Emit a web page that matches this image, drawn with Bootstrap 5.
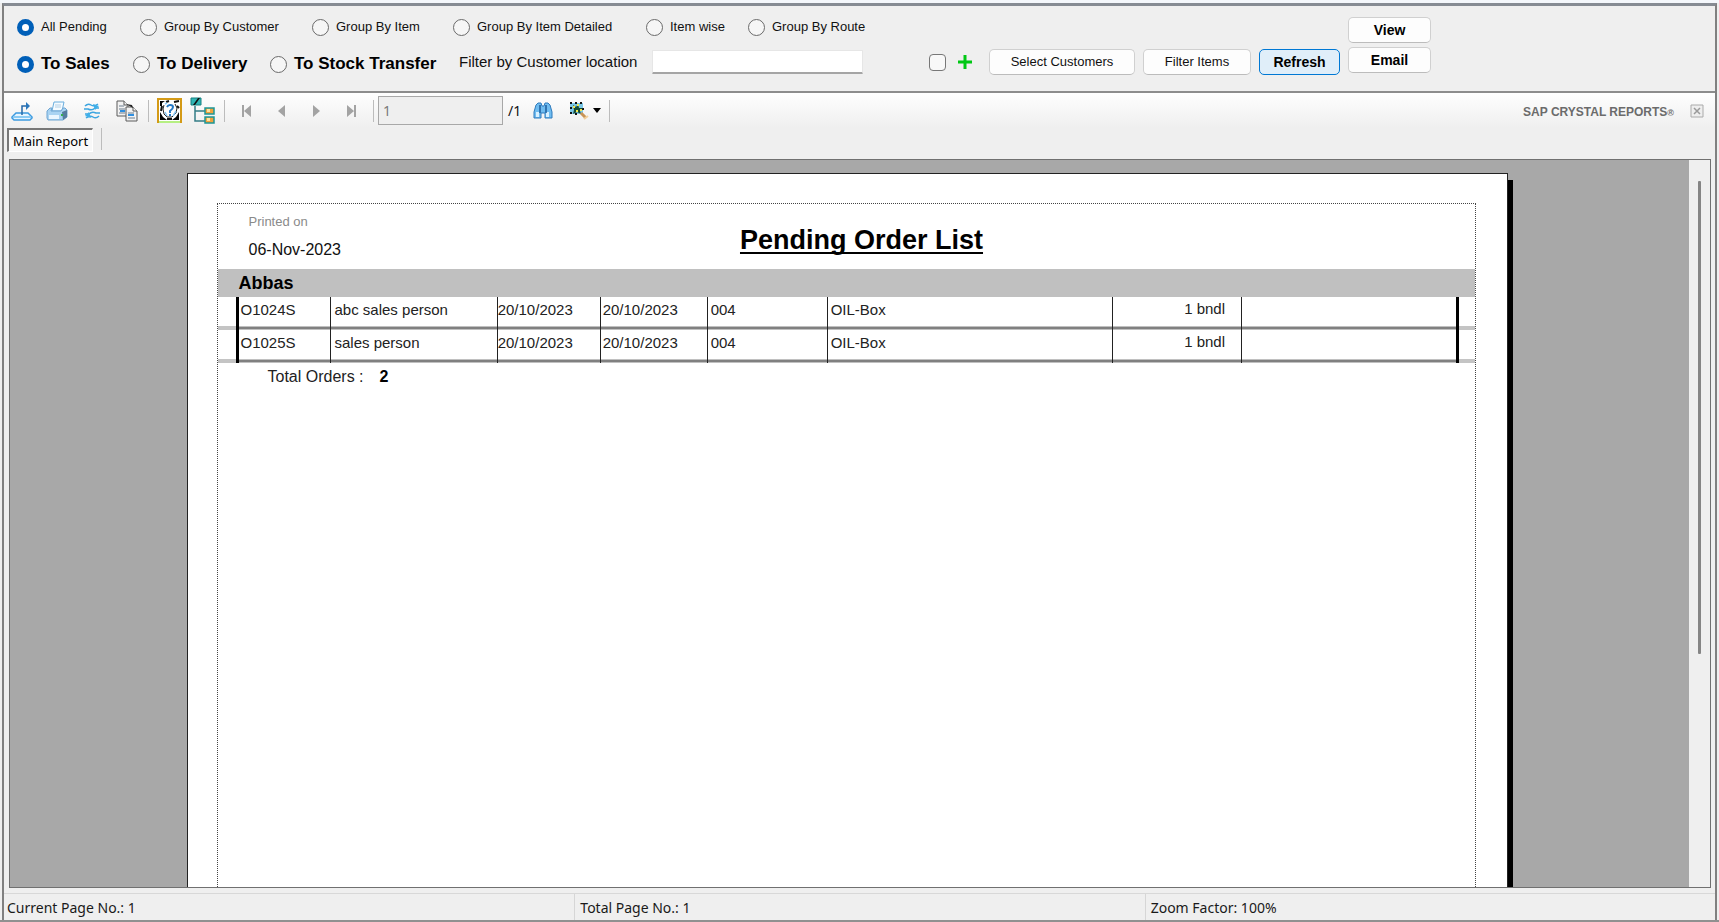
<!DOCTYPE html>
<html lang="en">
<head>
<meta charset="utf-8">
<meta name="viewport" content="width=device-width, initial-scale=1">
<title>Pending Order List</title>
<link rel="stylesheet" href="https://cdn.jsdelivr.net/npm/bootstrap@5.3.0/dist/css/bootstrap.min.css">
<style>
  :root { --face: #efefef; --ui: "Noto Sans", "Open Sans", sans-serif; }
  body { font-family: "Liberation Sans", Arial, sans-serif; font-size: 13px; line-height: 16px; color: #111; background: var(--face); }
  .app-window { border-top: 3px solid #f4f7fb; border-bottom: 2px solid #909090; }
  .window-frame { border: 2px solid #808080; border-bottom: 0; border-top: 3px solid #868b93; margin: 0 2px; min-height: 0; }

  /* filter panel */
  .filter-panel { padding: 7px 12px 0 13px; height: 87px; border-bottom: 2px solid #8c8c8c; }
  .filter-main { flex: 0 1 1323px; min-width: 0; }
  .filter-line { height: 34px; }
  .group-options { display: grid; grid-template-columns: 123px 172px 141px 193px 102px auto; height: 28px; }
  .target-options { display: grid; grid-template-columns: 116px 137px 189px; padding-top: 4px; font-size: 17px; font-weight: 700; color: #000; }
  .option { display: flex; align-items: center; gap: 7px; white-space: nowrap; }
  .option .form-check-input { width: 17px; height: 17px; margin: 0; flex: none; border: 1px solid #6a6a6a; background-color: #f6f6f6; background-image: none; box-shadow: none; }
  .option .form-check-input[type=radio]:checked { border: 5px solid #005fb8; background-color: #fff; }
  .tick .form-check-input { border-radius: 4px; border-color: #777; border-width: 1px; background-color: #f8f8f8; }
  .tick { gap: 11px; }
  .location-label { font-size: 15px; width: 193px; }
  .location-input { width: 211px; height: 24px; border: 1px solid #e6e6e6; border-bottom: 2px solid #a5a5a5; border-radius: 1px; padding: 0 4px; }
  .btn-win { height: 26px; padding: 0; font-size: 13px; line-height: 16px; background: #fdfdfd; color: #111; border: 1px solid #d0d0d0; border-bottom-color: #bcbcbc; border-radius: 5px; }
  .btn-strong { font-size: 14px; font-weight: 700; color: #000; width: 83px; }
  .btn-strong.btn-focus { background: #e0eef9; border: 1px solid #0078d4; width: 81px; }
  .w-customers { width: 146px; } .w-items { width: 108px; }

  /* report toolbar */
  .report-bar { height: 35px; background: linear-gradient(#fefefe, var(--face)); padding: 0 11px 0 0; }
  .tool { background: none; border: 0; padding: 0; display: flex; align-items: center; justify-content: center; height: 28px; flex: none; }
  .tool-sm { width: 35px; }
  .tool-sep { width: 1px; height: 22px; background: #bcbcbc; flex: none; }
  .page-input { width: 125px; height: 29px; border: 1px solid #a8a8a8; background: var(--face); color: #7a7a7a; font-family: var(--ui); font-size: 14px; padding: 0 4px; border-radius: 0; }
  .page-count { font-family: var(--ui); font-size: 14px; width: 30px; padding-left: 5px; }
  .brand-text { font-size: 12px; font-weight: 700; color: #6b6b6b; padding-top: 4px; }
  .brand-mark { font-size: 9px; }

  /* report tabs */
  .tab-row { height: 31px; padding-left: 3px; }
  .report-tab { height: 24px; width: 86px; border: 0; border-left: 2px solid #777; border-top: 2px solid #777; border-right: 1px solid #fff; border-bottom: 1px solid #fff; background: #f8f8f8; padding: 0; font-family: var(--ui); font-size: 13px; line-height: 16px; white-space: nowrap; }

  /* viewer */
  .viewer { margin: 0 4px 0 5px; border: 1px solid #707070; background: #a8a8a8; min-height: 0; }
  .canvas-area { min-width: 0; padding: 13px 0 0; overflow: hidden; }
  .sheet-wrap { max-width: 1326px; }
  .sheet { background: #fff; border: 1px solid #222; border-bottom: 0; padding: 29px 31px 0 29px; min-width: 0; }
  .sheet-shadow { flex: none; width: 5px; margin-top: 7px; background: #000; }
  .sheet-margin { border: 1px dotted #444; border-bottom: 0; }
  .report-head { height: 65px; display: grid; grid-template-columns: 1fr auto 1fr; padding: 10px 0 0 31px; }
  .printed-label { color: #8a8a8a; }
  .printed-date { font-size: 16px; line-height: 20px; margin-top: 10px; color: #111; }
  .report-title { font-size: 27px; line-height: 32px; font-weight: 700; color: #000; text-decoration: underline; text-decoration-thickness: 2px; text-underline-offset: 3px; text-decoration-skip-ink: none; margin: 10px 0 0; white-space: nowrap; }
  .customer-band { background: #c0c0c0; height: 28px; padding-left: 21px; font-size: 18px; line-height: 28px; font-weight: 700; color: #000; margin: 0; }
  .orders { width: 100%; table-layout: fixed; border-collapse: separate; border-spacing: 0; font-size: 15px; line-height: 18px; color: #222; }
  .orders td { height: 33px; padding: 4px 0 0 4px; vertical-align: top; border-left: 1px solid #222; white-space: nowrap;
    background: linear-gradient(to top, #c0c0c0 1px, #808080 1px, #808080 3px, #c0c0c0 3px, #c0c0c0 4px, transparent 4px); }
  .orders td.rim { border-left: 0; padding: 0; background: linear-gradient(to top, #c4c4c4 4px, transparent 4px); }
  .orders td.first { border-left: 3px solid #000; padding-left: 2px; }
  .orders td.last { border-right: 3px solid #000; }
  .orders td.ordered { padding-left: 0; }
  .orders td.item { padding-left: 3px; }
  .orders td.due { padding-left: 2px; }
  .orders td.qty { padding: 3px 16px 0 0; text-align: right; }
  .totals { font-size: 16px; line-height: 20px; padding: 4px 0 0 50px; color: #222; }
  .scroll-rail { width: 21px; background: var(--face); padding: 21px 9px 0 0; }
  .scroll-thumb { width: 3px; height: 67%; background: #858585; border-radius: 1px; }

  /* status bar */
  .status-row { margin-top: 5px; border-top: 1px solid #d8d8d8; height: 27px; font-family: var(--ui); font-size: 14px; line-height: 28px; color: #1a1a1a; }
  .status-cell { padding-left: 5px; } .status-cell:first-child { padding-left: 3px; }
  .status-cell + .status-cell { border-left: 1px solid #d6d6d6; }
</style>
</head>
<body>
<div class="app-window d-flex flex-column vh-100 overflow-hidden">
 <div class="window-frame d-flex flex-column flex-grow-1">
  <form class="filter-panel d-flex" onsubmit="return false">
    <div class="filter-main">
      <div class="group-options">
        <label class="option"><input class="form-check-input" type="radio" name="grouping" checked>All Pending</label>
        <label class="option"><input class="form-check-input" type="radio" name="grouping">Group By Customer</label>
        <label class="option"><input class="form-check-input" type="radio" name="grouping">Group By Item</label>
        <label class="option"><input class="form-check-input" type="radio" name="grouping">Group By Item Detailed</label>
        <label class="option"><input class="form-check-input" type="radio" name="grouping">Item wise</label>
        <label class="option"><input class="form-check-input" type="radio" name="grouping">Group By Route</label>
      </div>
      <div class="filter-line d-flex align-items-center mt-1">
        <div class="target-options">
          <label class="option"><input class="form-check-input" type="radio" name="target" checked>To Sales</label>
          <label class="option"><input class="form-check-input" type="radio" name="target">To Delivery</label>
          <label class="option"><input class="form-check-input" type="radio" name="target">To Stock Transfer</label>
        </div>
        <label class="location-label" for="location">Filter by Customer location</label>
        <input class="location-input" id="location" type="text">
        <div class="d-flex align-items-center ms-auto">
          <label class="option tick me-3"><input class="form-check-input" type="checkbox" aria-label="Add">
            <svg width="16" height="16" viewBox="0 0 16 16" aria-hidden="true"><path d="M1 8h14M8 1v14" stroke="#00c814" stroke-width="3"/></svg></label>
          <button class="btn btn-win w-customers me-2" type="button">Select Customers</button>
          <button class="btn btn-win w-items me-2" type="button">Filter Items</button>
          <button class="btn btn-win btn-strong btn-focus" type="button">Refresh</button>
        </div>
      </div>
    </div>
    <div class="d-flex flex-column ps-2">
      <button class="btn btn-win btn-strong mt-1 mb-1" type="button">View</button>
      <button class="btn btn-win btn-strong" type="button">Email</button>
    </div>
  </form>

  <div class="report-bar d-flex align-items-center">
    <button class="tool tool-sm" type="button" aria-label="Export"><svg width="22" height="20" viewBox="0 0 22 20"><path d="M5 12h12l4 4v1l-2 2H3l-2-2v-1z" fill="#e7f5ff" stroke="#3d9be0" stroke-width="1.5"/><path d="M2 16h18" stroke="#8cccf4" stroke-width="2"/><path d="M11 14V5h5" fill="none" stroke="#2468a8" stroke-width="1.5"/><path d="M15 1l4 4-4 4z" fill="#2b78bd"/></svg></button>
    <button class="tool tool-sm" type="button" aria-label="Print"><svg width="22" height="20" viewBox="0 0 22 20"><path d="M6 10L8 1h10l-2 9z" fill="#f5fbff" stroke="#6aaede"/><path d="M9 4h6M9 6h6" stroke="#b4cfe4"/><path d="M1 10l3-3h2l-1 3h10l2-3h2l2 2v7l-4 3H2l-1-2z" fill="#a9d3f2" stroke="#6fa5d2"/><path d="M16 11l5-2v7l-4 3z" fill="#547c9e"/><path d="M3 14h10v4H3z" fill="#eaf6ff"/><path d="M15 13h2v2h-2z" fill="#35b04a"/></svg></button>
    <button class="tool tool-sm" type="button" aria-label="Refresh report"><svg width="18" height="18" viewBox="0 0 18 18" fill="none" stroke="#3da5e0" stroke-width="1.5"><path d="M2 4q3-3 6-1t7-1M1 7h4q4 2 7-1h4M16 14q-3 3-6 1t-7 1M17 11h-4q-4-2-7 1H2"/><path d="M10 2l6 2-4 4zM8 16l-6-2 4-4z" fill="#3fb0ea" stroke="none"/></svg></button>
    <button class="tool tool-sm" type="button" aria-label="Copy"><svg width="22" height="22" viewBox="0 0 22 22"><g stroke="#5a5a5a" fill="#f2f2f2"><path d="M1 1h7l4 4v11H1z"/><path d="M8 1v4h4"/><path d="M10 7h7l4 4v10H10z"/><path d="M17 7v4h4"/></g><path d="M3 6h5M3 9h6M3 13h6M12 13h6M12 18h7" stroke="#6d7f90"/><path d="M4 11h5M12 15h6" stroke="#2f8fe0" stroke-width="2"/><path d="M10 4l6 1 1 3z" fill="#222"/></svg></button>
    <span class="tool-sep ms-1"></span>
    <button class="tool ms-2" type="button" aria-label="Toggle parameter panel"><svg width="25" height="25" viewBox="0 0 25 25"><path d="M1 1h23v23H1z" fill="#fff" stroke="#d49a16" stroke-width="2"/><path d="M2 24h21" stroke="#b6ef82" stroke-width="2"/><path d="M3 3h5L5 5v3H3zM3 14l3 5 4 3H3zM22 22h-7l4-3 3-5z" fill="#050505"/><path d="M17 4l5-1M20 8l2 2M5 8l-1 5M9 4l3-1M10 21h5" stroke="#111" stroke-width="2" fill="none"/><path d="M7 7l-1 4 1 5 3 3h5l4-4 1-5-2-4" stroke="#222" fill="none"/><path d="M8 14l2 4M16 18l3-5M8 6l2-1" stroke="#8ac6f2" stroke-width="1.5"/><path d="M10 9q1-2 3-2 3 0 3 2 0 2-3 4v2M13 16v2" stroke="#2278c6" stroke-width="2" fill="none"/></svg></button>
    <button class="tool ms-2" type="button" aria-label="Toggle group tree"><svg width="26" height="28" viewBox="0 0 26 28"><path d="M1 1h10v7H1z" fill="#31b5b5" stroke="#168080"/><path d="M3 8l5-7h2L5 8z" fill="#111"/><path d="M5 9v15h10M5 14h10" stroke="#357d86" stroke-width="1.5" fill="none"/><g fill="#f2a23c" stroke="#1d9696" stroke-width="1.5"><path d="M15 11h9v6h-9zM15 20h9v6h-9z"/></g><path d="M17 12h3v3h-3zM17 21h3v3h-3z" fill="#ffe3a0"/></svg></button>
    <span class="tool-sep ms-2 me-1"></span>
    <button class="tool tool-sm" type="button" aria-label="First page"><svg width="9" height="12" viewBox="0 0 9 12" fill="#a3a3a3"><path d="M0 0h2v12H0zM9 0v12L2 6z"/></svg></button>
    <button class="tool tool-sm" type="button" aria-label="Previous page"><svg width="7" height="12" viewBox="0 0 7 12" fill="#a3a3a3"><path d="M7 0v12L0 6z"/></svg></button>
    <button class="tool tool-sm" type="button" aria-label="Next page"><svg width="7" height="12" viewBox="0 0 7 12" fill="#a3a3a3"><path d="M0 0v12l7-6z"/></svg></button>
    <button class="tool tool-sm" type="button" aria-label="Last page"><svg width="9" height="12" viewBox="0 0 9 12" fill="#a3a3a3"><path d="M7 0h2v12H7zM0 0v12l7-6z"/></svg></button>
    <span class="tool-sep ms-1"></span>
    <input class="page-input ms-1" type="text" value="1" aria-label="Page number" disabled>
    <span class="page-count">/1</span>
    <button class="tool" type="button" aria-label="Find text"><svg width="20" height="18" viewBox="0 0 20 18"><path d="M3 3l2-2h3l1 3h2l1-3h3l2 2 2 7v6h-7v-5h-4v5H1v-6z" fill="#6fbcf0" stroke="#2e7bbd"/><path d="M3 10h3v5H3zM13 10h3v5h-3z" fill="#d8f0ff"/><path d="M7 3v8M13 3v8" stroke="#1d5c9c" stroke-width="1.5"/></svg></button>
    <button class="tool ms-3 gap-1" type="button" aria-label="Zoom"><svg width="20" height="20" viewBox="0 0 20 20"><path d="M1 2h13v11H1z" fill="#7cc7e6"/><path d="M1 2h2M6 2h2M11 2h2M1 7h2M1 12h2M6 13h2M13 8h2" stroke="#111" stroke-width="2"/><path d="M4 4l3 2 2-3 1 4 4 0-3 3 1 3-4-2-4 2 1-4z" fill="#164c36"/><path d="M4 6h2M8 4h2M7 10h2M11 9h2" stroke="#f3e94e" stroke-width="2"/><path d="M12 12l5 5" stroke="#c89456" stroke-width="3"/><path d="M15 18l4-3" stroke="#f1cf9c" stroke-width="2"/></svg><svg width="8" height="5" viewBox="0 0 8 5"><path d="M0 0h8L4 5z"/></svg></button>
    <span class="tool-sep ms-2"></span>
    <span class="brand-text ms-auto">SAP CRYSTAL REPORTS<span class="brand-mark">®</span></span>
    <button class="tool ms-3" type="button" aria-label="Close report"><svg width="14" height="14" viewBox="0 0 14 14"><path d="M1 1h12v12H1z" fill="#eee" stroke="#aaa"/><path d="M4 4l6 6M10 4l-6 6" stroke="#9a9a9a" stroke-width="1.5"/></svg></button>
  </div>

  <div class="tab-row d-flex">
    <button class="report-tab" type="button">Main Report</button>
    <span class="tool-sep ms-2"></span>
  </div>

  <main class="viewer d-flex flex-grow-1">
    <div class="canvas-area d-flex flex-grow-1">
      <div class="sheet-wrap d-flex flex-grow-1 mx-auto">
        <article class="sheet flex-grow-1 d-flex flex-column">
          <div class="sheet-margin flex-grow-1">
            <header class="report-head">
              <div>
                <div class="printed-label">Printed on</div>
                <div class="printed-date">06-Nov-2023</div>
              </div>
              <h1 class="report-title">Pending Order List</h1>
            </header>
            <h2 class="customer-band">Abbas</h2>
            <table class="orders">
              <colgroup>
                <col style="width:18px"><col style="width:94px"><col style="width:13.3%"><col style="width:103px"><col style="width:107px"><col style="width:120px"><col><col style="width:129px"><col style="width:17.3%"><col style="width:16px">
              </colgroup>
              <tbody>
                <tr><td class="rim"></td><td class="first">O1024S</td><td>abc sales person</td><td class="ordered">20/10/2023</td><td class="due">20/10/2023</td><td class="item">004</td><td class="item">OIL-Box</td><td class="qty">1 bndl</td><td class="last"></td><td class="rim"></td></tr>
                <tr><td class="rim"></td><td class="first">O1025S</td><td>sales person</td><td class="ordered">20/10/2023</td><td class="due">20/10/2023</td><td class="item">004</td><td class="item">OIL-Box</td><td class="qty">1 bndl</td><td class="last"></td><td class="rim"></td></tr>
              </tbody>
            </table>
            <div class="totals">Total Orders :<strong class="text-black ms-3">2</strong></div>
          </div>
        </article>
        <div class="sheet-shadow"></div>
      </div>
    </div>
    <div class="scroll-rail d-flex justify-content-end"><div class="scroll-thumb"></div></div>
  </main>

  <footer class="status-row row g-0">
    <div class="status-cell col-4">Current Page No.: 1</div>
    <div class="status-cell col-4">Total Page No.: 1</div>
    <div class="status-cell col-4">Zoom Factor: 100%</div>
  </footer>
 </div>
</div>
<script src="https://cdn.jsdelivr.net/npm/bootstrap@5.3.0/dist/js/bootstrap.bundle.min.js"></script>
</body>
</html>
